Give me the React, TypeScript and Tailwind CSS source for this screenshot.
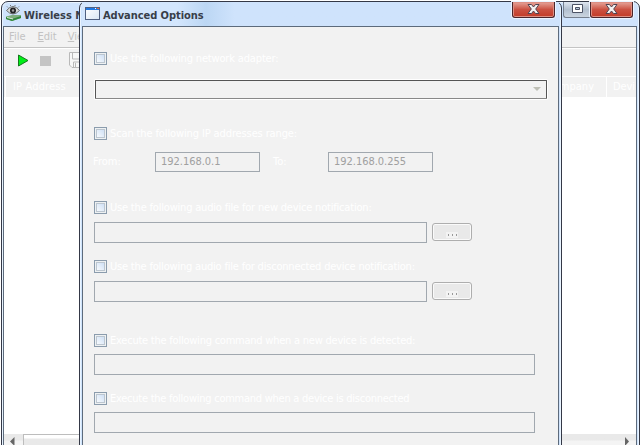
import React from "react";

function CloseButton() {
  return (
    <div className="flex h-4 w-[43px] shrink-0 justify-center rounded-b-[3px] border border-t-0 border-[#4b252b] bg-linear-to-b from-[#e5a59c] via-[#cb5142] via-50% to-[#c23b27] shadow-[inset_0_0_0_1px_#dd8f83,0_0_0_1px_#ecf4ff]">
      <svg width="13" height="12" viewBox="0 0 13 12" className="mt-px">
        <path d="M1 1.5h3.5L6.5 4l2-2.500H12L8.700 6l3.300 4.500H8.500l-2-2.500-2 2.500H1L4.300 6z" fill="#f3f0f0" stroke="#514451" strokeWidth="1" />
      </svg>
    </div>
  );
}

function Check({ label, track }: { label: string; track: string }) {
  return (
    <div className="flex h-[13px] items-center gap-[3px]">
      <div className="h-[13px] w-[13px] shrink-0 border border-[#8b9cad] bg-[#eef1f2] p-px">
        <div className="h-[9px] w-[9px] border border-[#bcc6d0] bg-linear-to-bl from-[#cfe0f5] to-[#f7fafd]" />
      </div>
      <span className={`whitespace-nowrap leading-[13px] text-white ${track}`}>{label}</span>
    </div>
  );
}

function Field({ className, value }: { className: string; value?: string }) {
  return (
    <div className={`flex shrink-0 items-center border border-[#a1a8af] pl-[5px] text-[#a0a0a0] ${className}`}>
      {value}
    </div>
  );
}

function Browse() {
  return (
    <div className="mt-px flex h-[18px] w-10 justify-center rounded-[3px] border border-[#aeaeae] bg-[#e9e9e9] shadow-[inset_0_0_0_1px_#fafafa]">
      <svg width="12" height="6" className="mt-[8px]">
        <path d="M0 0h12v6H0z" fill="#f3f3f3" />
        <path d="M2 2h1v2H2zM6 2h1v2H6zM10 2h1v2h-1z" fill="#999" />
      </svg>
    </div>
  );
}

function MainWindow() {
  return (
    <div className="ml-px mt-px flex h-[460px] w-[639px] flex-col rounded-t-[7px] border border-[#343846] bg-[#cfe3fc] pl-px pr-[2px] shadow-[inset_0_0_0_1px_#e9f4ff]">
      <div className="flex h-6 shrink-0 items-start pl-[2px] pr-[4px]">
        <svg width="17" height="17" viewBox="0 0 17 17" className="mt-[3px]">
          <path d="M1 11.500l6-1.500h9v3l-9 3-6-2z" fill="#7fae7e" />
          <path d="M1 12l6 2 9-3v2l-9 3-6-2z" fill="#2f883a" />
          <path d="M2 12l6 1.500v1L2 13z" fill="#dbe9db" />
          <path d="M1.500 5.500q6.500-8 13 0-6.500 7-13 0z" fill="#d5d8d6" stroke="#6b6e70" />
          <circle cx="8" cy="5.500" r="3" fill="#242426" />
          <circle cx="8" cy="5.500" r="1.200" fill="#a0a0a0" />
          <path d="M2 1.500l1 1M5.500 0v1M10 0v1M14 1.500l-1 1" stroke="#777" />
        </svg>
        <span className="ml-[2px] mt-[6px] whitespace-nowrap text-[11px] font-bold leading-4 text-[#383e49]">Wireless N</span>
        <div className="ml-auto flex">
          <div className="flex h-4 w-[27px] justify-center rounded-bl-[3px] border border-r-0 border-t-0 border-[#76808e] bg-linear-to-b from-[#dfe6f0] via-[#b2bfce] to-[#cbd5e0]">
            <svg width="13" height="11" className="mt-px">
              <path d="M1.500 1.500h10v8h-10z" fill="#fff" stroke="#4c5365" />
              <path d="M4.500 4.500h4v2h-4z" fill="#b8c7d9" stroke="#4c5365" />
            </svg>
          </div>
          <CloseButton />
        </div>
      </div>
      <div className="flex min-h-0 grow flex-col border border-b-0 border-[#5d6b7c] bg-[#f2f2f2]">
        <div className="flex h-[20px] shrink-0 gap-[12px] pl-[5px] pt-px text-[11px] leading-[18px] text-[#c2c2c2]">
          <span><u>F</u>ile</span>
          <span><u>E</u>dit</span>
          <span className="-ml-px"><u>V</u>iew</span>
        </div>
        <div className="h-[2px] shrink-0 border-b border-white bg-[#c4c4c4]" />
        <div className="flex h-[27px] shrink-0 pl-[14px] pt-[5px]">
          <svg width="11" height="13"><path d="M.5 1v11L10 6.500z" fill="#00ee18" stroke="#16771d" /></svg>
          <div className="ml-[11px] mt-[2px] h-[10px] w-[11px] bg-[#c4c4c4]" />
          <svg width="16" height="16" className="-mt-[2px] ml-[18px]">
            <path d="M.5.5h15v15H3L.500 13z" fill="#f7f7f7" stroke="#b9b9b9" />
            <path d="M3.500 1v6h9V1M4.500 15v-5h7v5M6.500 11v4" fill="none" stroke="#b9b9b9" />
          </svg>
        </div>
        <div className="flex h-[21px] shrink-0 overflow-hidden border-t border-white text-[11px] leading-[20px] text-white">
          <div className="ml-px w-[540px] shrink-0 border-l border-white pl-[7px] tracking-[0.15px]">IP Address</div>
          <div className="w-[62px] shrink-0 whitespace-nowrap border-r border-white pr-[12px] text-right">Company</div>
          <div className="shrink-0 pl-[6px] tracking-[-0.1px]">Devi</div>
        </div>
        <div className="h-[337px] shrink-0 bg-white" />
        <div className="flex h-[30px] shrink-0 bg-linear-to-b from-[#e9e9e9] from-[6px] to-[#f4f4f4] to-[7px]">
          <svg width="19" height="14"><path d="M10.500 3v9L6 7.500z" fill="#666" /></svg>
          <div className="w-[470px] border-l border-t border-[#bdbdbd] bg-linear-to-b from-white from-[3px] to-[#e9e9e9] to-[4px]" />
          <svg width="10" height="14" className="ml-auto mr-1"><path d="M3 3v9l4-4.500z" fill="#666" /></svg>
        </div>
      </div>
    </div>
  );
}

function OptionsDialog() {
  return (
    <div className="flex h-[460px] w-[483px] flex-col rounded-t-[7px] border border-[#343846] bg-[#cfe3fc] px-[2px] shadow-[inset_0_0_0_1px_#e9f4ff]">
      <div className="flex h-6 shrink-0 items-start bg-linear-to-r from-[#d3e6fd] from-[20%] via-[#bcd7f4] via-[26%] to-[#cfe3fc] to-[32%] pl-[3px] pr-[4px]">
        <div className="mt-[5px] h-[13px] w-[15px] border border-[#506080] bg-linear-to-br from-white to-[#dbe7f4]">
          <div className="flex h-[2px] justify-end gap-px bg-[#2278e0]">
            <div className="h-px w-px bg-white" />
            <div className="h-px w-[2px] bg-[#e8683c]" />
          </div>
        </div>
        <span className="ml-[3px] mt-[6px] whitespace-nowrap text-[11px] font-bold leading-4 tracking-[-0.05px] text-[#383e49]">Advanced Options</span>
        <div className="ml-auto"><CloseButton /></div>
      </div>
      <div className="flex min-h-0 grow flex-col items-start border border-b-0 border-[#5d6b7c] bg-[#f2f2f2] pl-[11px] pt-[25px] text-[11px]">
        <Check label="Use the following network adapter:" track="tracking-[-0.16px]" />
        <div className="ml-px mt-[15px] flex h-[19px] w-[452px] shrink-0 items-center justify-end rounded-[1px] border border-[#555] border-b-[#888] pr-[5px] shadow-[0_0_0_1px_#fff]">
          <svg width="8" height="5"><path d="M0 0h8L4 4z" fill="#bebfb5" /></svg>
        </div>
        <div className="mt-[28px]"><Check label="Scan the following IP addresses range:" track="tracking-[-0.12px]" /></div>
        <div className="-ml-px mt-[12px] flex h-5 items-center">
          <span className="w-[62px] text-white">From:</span>
          <Field className="h-5 w-[105px] tracking-[-0.03px]" value="192.168.0.1" />
          <span className="w-[68px] pl-[13px] text-white">To:</span>
          <Field className="h-5 w-[105px] tracking-[-0.03px]" value="192.168.0.255" />
        </div>
        <div className="mt-[29px]"><Check label="Use the following audio file for new device notification:" track="tracking-[-0.19px]" /></div>
        <div className="mt-[8px] flex gap-[5px]"><Field className="h-[21px] w-[333px]" /><Browse /></div>
        <div className="mt-[17px]"><Check label="Use the following audio file for disconnected device notification:" track="tracking-[-0.2px]" /></div>
        <div className="mt-[8px] flex gap-[5px]"><Field className="h-[21px] w-[333px]" /><Browse /></div>
        <div className="mt-[32px]"><Check label="Execute the following command when a new device is detected:" track="tracking-[-0.23px]" /></div>
        <Field className="mt-[7px] h-[21px] w-[441px]" />
        <div className="mt-[17px]"><Check label="Execute the following command when a device is disconnected" track="tracking-[-0.25px]" /></div>
        <Field className="mt-[7px] h-[21px] w-[441px]" />
      </div>
    </div>
  );
}

export default function App() {
  return (
    <div className="relative flex h-[445px] w-[640px] items-start overflow-hidden bg-white font-['DejaVu_Sans_Condensed','DejaVu_Sans',sans-serif]">
      <MainWindow />
      <div className="absolute left-[79px] top-px">
        <OptionsDialog />
      </div>
    </div>
  );
}
